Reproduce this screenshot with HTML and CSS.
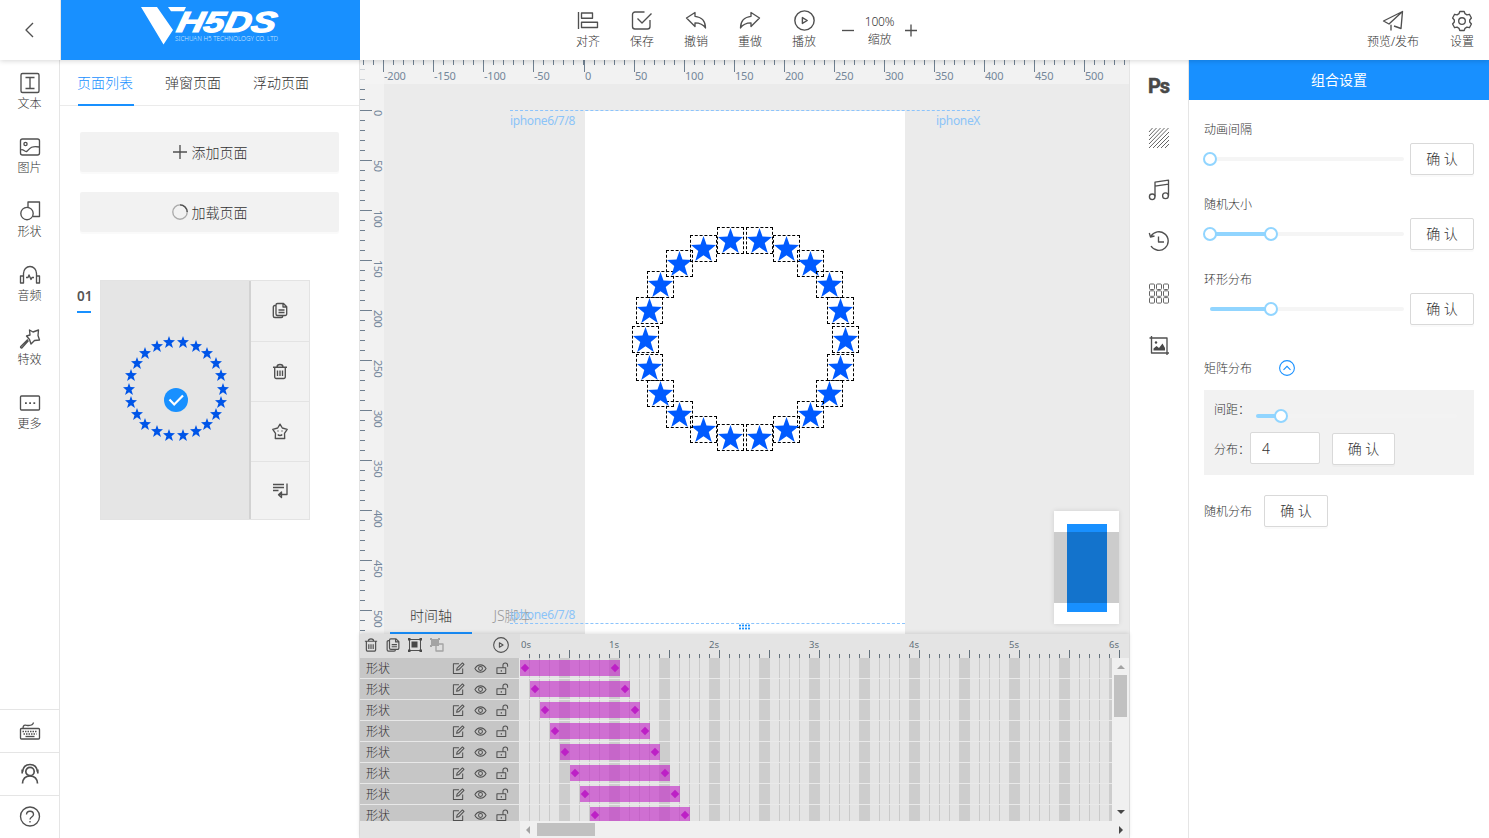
FILE: index.html
```html
<!DOCTYPE html>
<html lang="zh-CN">
<head>
<meta charset="utf-8">
<title>H5DS</title>
<link rel="stylesheet" href="styles.css">
</head>
<body>
<svg class="symbols" width="0" height="0">
  <symbol id="star" viewBox="0 0 100 100"><path d="M50 0 62 34 100 36 71 60 83 100 50 77 17 100 29 60 0 36 38 34Z"/></symbol>
  <symbol id="copy" viewBox="0 0 16 16"><path d="M5.500 1h6l3.200 3.200v7.300a1.500 1.500 0 0 1-1.500 1.500H5.500A1.500 1.500 0 0 1 4 11.500v-9A1.500 1.500 0 0 1 5.500 1zM11 1v3.500h3.500M6.500 7.500h6M6.500 10h6M4 3H2.800A1.500 1.500 0 0 0 1.300 4.500v9A1.500 1.500 0 0 0 2.800 15h6.500a1.500 1.500 0 0 0 1.500-1.500V13"/></symbol>
  <symbol id="trash" viewBox="0 0 16 16"><path d="M1 3.700h14M5 3.500C5 1.800 5.800 1 8 1s3 .8 3 2.500M2.700 4v9.500a1.500 1.500 0 0 0 1.500 1.500h7.600a1.500 1.500 0 0 0 1.500-1.500V4M5.500 7v5.500M8 7v5.500M10.500 7v5.500"/></symbol>
  <symbol id="edit" viewBox="0 0 14 14"><path d="M7.500 2H1.500v10.500h10V7M5 9l.5-2.300L11.300 1l1.600 1.600L7.200 8.400z"/></symbol>
  <symbol id="eye" viewBox="0 0 14 14"><path d="M1 7c3-5.200 9-5.200 12 0-3 5.200-9 5.200-12 0z"/><circle cx="7" cy="7" r="2.100"/></symbol>
  <symbol id="unlock" viewBox="0 0 14 14"><path d="M1 6.300h9.500v6.200H1zM7.500 6V3.500a2.500 2.500 0 0 1 5 0V5M5.700 8.500v2"/></symbol>
  <symbol id="play" viewBox="0 0 20 20"><circle cx="10" cy="10" r="9.200"/><path d="M8 7.200v5.600l4.600-2.800z"/></symbol>
</svg>

<header class="topbar">
  <div class="back"><svg class="ico" width="20" height="20" viewBox="0 0 20 20"><path d="M13 3 6 10l7 7"/></svg></div>
  <div class="brand">
    <svg width="142" height="40" viewBox="0 0 142 40">
      <path class="brand-fill" d="M0 0h16l16 23-9.500 14.500zM27 0h18l-2 4.200H30z"/>
      <text class="brand-name" transform="translate(0 25.300) skewX(-12)" x="34.500" y="0" textLength="99" lengthAdjust="spacingAndGlyphs">H5DS</text>
      <text class="brand-sub" x="34" y="34.300" textLength="103" lengthAdjust="spacingAndGlyphs">SICHUAN H5 TECHNOLOGY CO. LTD</text>
    </svg>
  </div>
  <div class="tools">
    <div class="tool"><svg class="ico" width="22" height="22" viewBox="0 0 22 22"><path d="M1.500 2v17M4.500 3h11v5.200h-11zM4.500 12.200h16v5.300h-16z"/></svg><span>对齐</span></div>
    <div class="tool"><svg class="ico" width="22" height="22" viewBox="0 0 22 22"><path d="M13.500 2H4a2.500 2.500 0 0 0-2.500 2.500v12A2.500 2.500 0 0 0 4 19h12.500a2.500 2.500 0 0 0 2.500-2.500V10M6.500 8.500l4.500 4.500 9.500-9.500"/></svg><span>保存</span></div>
    <div class="tool"><svg class="ico" width="22" height="22" viewBox="0 0 22 22"><path d="M1.500 8 10 2.500v3.800c6.500.5 10.500 5 10.500 11.700-2.500-4-5.500-5.200-10.500-5.200v3.700z"/></svg><span>撤销</span></div>
    <div class="tool"><svg class="ico" width="22" height="22" viewBox="0 0 22 22"><path d="M20.500 8 12 2.500v3.800C5.500 6.800 1.500 11.300 1.500 18c2.500-4 5.500-5.200 10.500-5.200v3.700z"/></svg><span>重做</span></div>
    <div class="tool"><svg class="ico" width="21" height="22"><use href="#play" width="21" height="21"/></svg><span>播放</span></div>
    <div class="zoom">
      <svg class="ico" width="14" height="14" viewBox="0 0 14 14"><path d="M1 7.500h12"/></svg>
      <div class="zoom-text"><span>100%</span><span>缩放</span></div>
      <svg class="ico" width="14" height="14" viewBox="0 0 14 14"><path d="M1 7.500h12M7 1.500v12"/></svg>
    </div>
  </div>
  <div class="actions">
    <div class="tool"><svg class="ico" width="22" height="22" viewBox="0 0 22 22"><path d="M20.500 1.500 1.500 11l5.500 3L20.500 1.500 19 18.500l-7-2.500M9 14.700V20.500"/></svg><span>预览/发布</span></div>
    <div class="tool"><svg class="ico" width="22" height="22" viewBox="0 0 22 22"><path d="M8.800 1.500h4.400l.8 2.200 1.900 1.100 2.500-.5 2 3.700-1.700 2v2l1.700 2-2 3.700-2.500-.5-1.900 1.100-.8 2.200H8.800L8 18.300l-1.900-1.100-2.500.5-2-3.700 1.700-2v-2l-1.700-2 2-3.700 2.500.5L8 3.700z"/><circle cx="11" cy="11" r="3.300"/></svg><span>设置</span></div>
  </div>
</header>

<main class="workspace">
  <nav class="side">
    <div class="side-list">
      <div class="side-item"><svg class="ico" width="22" height="22" viewBox="0 0 22 22"><rect x="2" y="1.500" width="18" height="19" rx="1.500"/><path d="M6.500 5.500h9M6.500 16.500h9M11 5.500v11"/></svg><span>文本</span></div>
      <div class="side-item"><svg class="ico" width="22" height="22" viewBox="0 0 22 22"><rect x="1.500" y="3" width="19" height="16" rx="2"/><circle cx="6.500" cy="8" r="1.600"/><path d="M2 14c2-1.500 3.500 2 5.500 1.500C10 14.500 10.500 9 20 11"/></svg><span>图片</span></div>
      <div class="side-item"><svg class="ico" width="22" height="22" viewBox="0 0 22 22"><circle cx="8" cy="13.500" r="6.200"/><path d="M9 7V2h11.500v14.500H14"/></svg><span>形状</span></div>
      <div class="side-item"><svg class="ico" width="22" height="22" viewBox="0 0 22 22"><path d="M4.500 12V9.500a6.500 7 0 0 1 13 0V12M1.500 12h3v7h-3zM17.500 12h3v7h-3zM7 13.500h2l1-2.500 2 4.500 1-2h2"/></svg><span>音频</span></div>
      <div class="side-item"><svg class="ico" width="22" height="22" viewBox="0 0 22 22"><path d="M10.500 2 14 4l5.500-2-.5 5.500 1.500 4.500-5 .5L12 16l-1.500-4.500L7.500 8l3.500-1zM9.500 12.500 3 19.800c-1 .5-2-.5-1.200-1.300l7-7"/></svg><span>特效</span></div>
      <div class="side-item"><svg class="ico" width="22" height="22" viewBox="0 0 22 22"><rect x="1.500" y="4" width="19" height="14" rx="1"/><path class="dots" d="M6 11.200h1.800M10.200 11.200H12M14.400 11.200h1.800"/></svg><span>更多</span></div>
    </div>
    <div class="side-foot">
      <div class="foot-item"><svg class="ico" width="22" height="22" viewBox="0 0 22 22"><rect x="1.500" y="8.500" width="19" height="10.500" rx="1"/><path d="M4 8.500c0-5 3-3 5.500-3S14 5.500 14.500 2.500"/><path class="keys" d="M3.500 11.500h15M4.500 14h13"/><path d="M6.500 16.500h9"/></svg></div>
      <div class="foot-item"><svg class="ico bold" width="22" height="22" viewBox="0 0 22 22"><circle cx="11" cy="8.500" r="4.200"/><path d="M3.500 20.500c.3-4.500 3-7.500 7.500-7.500s7.200 3 7.500 7.500M3.500 9C4 4 7 1.500 11 1.500S18 4 18.500 9M3.200 6.500v4M18.800 6.500v4"/></svg></div>
      <div class="foot-item"><svg class="ico" width="22" height="22" viewBox="0 0 22 22"><circle cx="11" cy="10.500" r="9.500"/><path d="M7.500 8.500c.2-4.500 7-4.200 7 0 0 2.500-3.500 2.500-3.500 5M11 15V16.500"/></svg></div>
    </div>
  </nav>

  <section class="pages">
    <div class="page-tabs"><span class="page-tab active">页面列表</span><span class="page-tab">弹窗页面</span><span class="page-tab">浮动页面</span></div>
    <div class="page-buttons">
      <button class="page-btn"><svg class="ico" width="16" height="16" viewBox="0 0 16 16"><path d="M1 8h14M8 1v14"/></svg><span>添加页面</span></button>
      <button class="page-btn"><svg class="ico" width="16" height="16" viewBox="0 0 16 16"><circle class="spin-track" cx="8" cy="8" r="7.200"/><path d="M8 .8A7.200 7.200 0 0 1 15.200 8"/></svg><span>加载页面</span></button>
    </div>
    <div class="page-row">
      <div class="page-no">01</div>
      <div class="page-card">
        <div class="thumb" id="thumb">
          <svg class="badge" width="24" height="24" viewBox="0 0 24 24"><circle cx="12" cy="12" r="12"/><path d="m5.500 11.500 4.700 5L19 7.500"/></svg>
        </div>
        <div class="card-tools">
          <div class="card-tool"><svg class="ico" width="16" height="17"><use href="#copy"/></svg></div>
          <div class="card-tool"><svg class="ico" width="16" height="17"><use href="#trash"/></svg></div>
          <div class="card-tool"><svg class="ico" width="16" height="17" viewBox="0 0 16 17"><path d="M8 1.200 10.300 5l4.900 1.300-2.700 4 .2 5.200H3.300l.2-5.200-2.700-4L5.700 5zM6 7.500v1M10 7.500v1M5.800 11.500c1 1.300 3.400 1.300 4.400 0"/></svg></div>
          <div class="card-tool"><svg class="ico" width="16" height="17" viewBox="0 0 16 17"><path d="M1 2.500h11M1 5.500h11M1 8.500h5.500M15 1.500v11H7M9.500 10 6.500 12.700l3 2.800z"/></svg></div>
        </div>
      </div>
    </div>
  </section>

  <section class="center">
    <div class="stage">
      <div class="phone"></div>
      <div class="guide guide-top"><span>iphone6/7/8</span><span>iphoneX</span></div>
      <div class="stars" id="stars"></div>
      <div class="ruler-y" id="rulerY"></div>
      <div class="ruler-x" id="rulerX"></div>
      <div class="bottom-tabs"><span class="bottom-tab active">时间轴</span><span class="bottom-tab">JS脚本</span></div>
      <div class="guide guide-bottom"><span>iphone6/7/8</span></div>
      <div class="grip"></div>
      <div class="minimap"><div class="mini-page"></div><div class="mini-view"></div></div>
    </div>
    <div class="timeline">
      <div class="tl-head">
        <div class="tl-tools">
          <svg class="ico" width="14" height="16"><use href="#trash"/></svg>
          <svg class="ico" width="14" height="16"><use href="#copy"/></svg>
          <svg class="ico frame" width="14" height="14" viewBox="0 0 14 14"><path d="M1.500 1.500h11v11h-11z"/><path class="solid" d="M0 0h2.500v2.500H0zM11.500 0H14v2.500h-2.500zM0 11.500h2.500V14H0zM11.500 11.500H14V14h-2.500zM3.500 3.500h6v6h-6z"/></svg>
          <svg class="ico dim" width="14" height="14" viewBox="0 0 14 14"><path d="M6 6h7v7H6z"/><path class="solid" d="M1 1h8v7H1zM0 0h2v2H0zM8 0h2v2H8zM0 7h2v2H0z"/></svg>
          <svg class="ico tl-play" width="16" height="16"><use href="#play"/></svg>
        </div>
        <div class="tl-ruler" id="tlRuler"></div>
      </div>
      <div class="tl-body">
        <div class="tl-names" id="tlNames"></div>
        <div class="tl-grid" id="tlGrid"></div>
        <div class="vscroll"><i class="arrow up"></i><i class="vthumb"></i><i class="arrow down"></i></div>
      </div>
      <div class="tl-foot"><div class="hscroll"><i class="arrow left"></i><i class="hthumb"></i><i class="arrow right"></i></div></div>
    </div>
  </section>

  <aside class="strip">
    <div class="strip-item ps">Ps</div>
    <div class="strip-item"><svg class="ico thin" width="22" height="22" viewBox="0 0 22 22"><path d="M1 5l3.500-4M1 9l7.500-8M1 13 12.500 1M1 17 16.500 1M1 21 20.500 1M5 21 21 5M9 21 21 9M13 21l8-8M17 21l4-4"/></svg></div>
    <div class="strip-item"><svg class="ico" width="22" height="22" viewBox="0 0 22 22"><path d="M7 17.500V3.200l13.500-2v15.500M7 7.200l13.500-2"/><circle cx="4.200" cy="17.800" r="2.800"/><circle cx="17.500" cy="16.700" r="2.900"/></svg></div>
    <div class="strip-item"><svg class="ico" width="22" height="22" viewBox="0 0 22 22"><path d="M2.800 5.500A9.300 9.300 0 1 1 3 15M1.300 2l1.200 4 4-1M10.500 5.500v5.500h5.500"/></svg></div>
    <div class="strip-item"><svg class="ico thin" width="22" height="22" viewBox="0 0 22 22"><g id="cells"><rect x="1.500" y="1" width="5" height="5.500" rx="1"/><rect x="8.500" y="1" width="5" height="5.500" rx="1"/><rect x="15.500" y="1" width="5" height="5.500" rx="1"/></g><use href="#cells" y="6.800"/><use href="#cells" y="13.600"/></svg></div>
    <div class="strip-item"><svg class="ico" width="22" height="22" viewBox="0 0 22 22"><path d="M3.500 1v17H21M1.500 3H19v17"/><path class="solid" d="M5.500 15.500v-2l3-2.500 2.500 2 3.500-4.500L17 13v2.500z"/><circle class="solid" cx="8" cy="7.500" r="1.200"/></svg></div>
  </aside>

  <aside class="panel">
    <h2 class="panel-title">组合设置</h2>
    <div class="panel-body">
      <div class="field"><label>动画间隔</label><div class="field-row"><div class="slider"><i class="knob at-0"></i></div><button class="ok">确 认</button></div></div>
      <div class="field"><label>随机大小</label><div class="field-row"><div class="slider"><i class="fill"></i><i class="knob at-0"></i><i class="knob at-1"></i></div><button class="ok">确 认</button></div></div>
      <div class="field"><label>环形分布</label><div class="field-row"><div class="slider"><i class="fill"></i><i class="knob at-1"></i></div><button class="ok">确 认</button></div></div>
      <div class="matrix-head"><label>矩阵分布</label><svg width="16" height="16" viewBox="0 0 16 16"><circle cx="8" cy="8" r="7.400"/><path d="m4.500 9.800 3.500-3.500 3.500 3.500"/></svg></div>
      <div class="matrix">
        <div class="matrix-gap"><label>间距：</label><div class="slider pale"><i class="fill short"></i><i class="knob at-2"></i></div></div>
        <div class="matrix-num"><label>分布：</label><div class="num">4</div><button class="ok">确 认</button></div>
      </div>
      <div class="random"><label>随机分布</label><button class="ok">确 认</button></div>
    </div>
  </aside>
</main>
<script src="app.js"></script>
</body>
</html>
```
FILE: styles.css
```css
* { box-sizing: border-box; }
body {
  margin: 0; width: 1489px; height: 838px; overflow: hidden; display: flex; flex-direction: column;
  background: #fff; color: #333; font: 300 12px/18px "Noto Sans", "Noto Sans CJK SC", sans-serif;
}
.symbols { position: absolute; }
svg { display: block; flex: none; }
button { font: inherit; color: inherit; }
i { display: block; }
.ico { fill: none; stroke: #505050; stroke-width: 1.350; stroke-linejoin: round; }
.ico.bold { stroke-width: 1.700; }
.ico.thin { stroke-width: 1; stroke: #666; }
.ico .solid { fill: #484848; stroke: none; }
.ico .dots { stroke-width: 1.800; }
.ico .keys { stroke-width: 1.400; stroke-dasharray: 1.500 1; }

.topbar { position: relative; z-index: 5; flex: none; height: 60px; display: flex; background: #fff; box-shadow: 0 1px 5px rgba(0,0,0,.16); }
.back { width: 61px; border-right: 1px solid #e8e8e8; display: flex; align-items: center; justify-content: center; }
.brand { width: 299px; background: #1890ff; padding: 7px 0 0 80px; }
.brand-fill { fill: #fff; }
.brand-name { fill: #fff; stroke: #fff; stroke-width: 1.200; font: italic 700 29px "Liberation Sans", sans-serif; }
.brand-sub { fill: #cfe7ff; font: 300 6.500px "Noto Sans", sans-serif; }
.tools { display: flex; padding-left: 201px; }
.tool { width: 54px; padding-top: 10px; display: flex; flex-direction: column; align-items: center; white-space: nowrap; }
.tool span { padding-top: 1px; }
.zoom { display: flex; align-items: center; padding-left: 10px; gap: 5px; }
.zoom-text { width: 39px; padding-top: 2px; display: flex; flex-direction: column; align-items: center; letter-spacing: -.2px; }
.actions { margin-left: auto; display: flex; gap: 15px; }

.workspace { flex: 1; display: flex; min-height: 0; }
.side { width: 60px; border-right: 1px solid #e5e5e5; display: flex; flex-direction: column; justify-content: space-between; }
.side-list { padding-top: 12px; }
.side-item { height: 64px; display: flex; flex-direction: column; align-items: center; }
.side-item span { padding-top: 1px; }
.foot-item { height: 43px; border-top: 1px solid #e5e5e5; display: flex; align-items: center; justify-content: center; }

.pages { width: 300px; border-right: 1px solid #e5e5e5; }
.page-tabs { height: 46px; border-bottom: 1px solid #ebebeb; padding-left: 18px; display: flex; gap: 32px; font-size: 14px; line-height: 45px; }
.page-tab { width: 56px; height: 46px; text-indent: -1px; white-space: nowrap; }
.page-tab.active { color: #1890ff; border-bottom: 2px solid #1890ff; }
.page-buttons { padding: 26px 20px 0; display: grid; gap: 20px; }
.page-btn { height: 40px; border: 0; border-radius: 2px; background: #f2f2f2; box-shadow: 0 2px 0 rgba(0,0,0,.02); display: flex; align-items: center; justify-content: center; gap: 4px; font-size: 14px; padding: 0; }
.page-btn span { padding-top: 2px; }
.spin-track { stroke: #aaa; }
.page-row { display: flex; padding: 48px 0 0 17px; }
.page-no { width: 23px; padding-top: 7px; font-size: 13.500px; font-weight: 600; color: #555; }
.page-no::after { content: ""; display: block; width: 14px; height: 2px; margin-top: 6px; background: #1890ff; }
.page-card { width: 210px; height: 240px; border: 1px solid #e3e3e3; display: flex; }
.thumb { position: relative; width: 150px; background: #e5e5e5; border-right: 2px solid #d2d2d2; }
.thumb .mini-star { position: absolute; width: 12px; height: 12px; fill: #0055e8; }
.badge { position: absolute; left: 63px; top: 107px; z-index: 1; }
.badge circle { fill: #1890ff; }
.badge path { fill: none; stroke: #fff; stroke-width: 2.200; }
.card-tools { flex: 1; background: #f2f2f2; }
.card-tool { height: 60px; border-bottom: 1px solid #e3e3e3; display: flex; align-items: center; justify-content: center; padding-right: 1px; }
.card-tool:first-child { height: 61px; padding-bottom: 2px; }
.card-tool:last-child { height: 57px; border: 0; }

.center { width: 770px; border-right: 1px solid #e5e5e5; display: flex; flex-direction: column; }
.stage { position: relative; height: 574px; overflow: hidden; background: #ebebeb; }
.phone { position: absolute; left: 225px; top: 51px; width: 320px; bottom: 0; background: #fff; }
.guide { position: absolute; left: 150px; color: #8cc4f8; line-height: 20px; display: flex; justify-content: space-between; font-weight: 400; letter-spacing: -.35px; }
.guide-top { top: 50px; width: 470px; border-top: 1px dashed #8cc4fc; }
.guide-bottom { top: 545px; width: 395px; height: 19px; border-bottom: 1px dashed #8cc4fc; }
.select { position: absolute; width: 27px; height: 27px; border: 1px dashed #000; }
.select svg { width: 25px; height: 25px; fill: #005aff; }
.ruler-x { position: absolute; left: 0; top: 0; width: 770px; height: 24px; display: flex; font-size: 11px; font-weight: 400; color: #74879a; line-height: 14px; letter-spacing: -.200px; background: rgba(245,245,245,.7); }
.rx { flex: none; width: 50px; padding: 9px 0 0 1px; background: linear-gradient(#708090,#708090) 0 0/1px 12px no-repeat, repeating-linear-gradient(90deg, #708090 0 1px, transparent 1px 10px) 0 0/100% 5px no-repeat; }
.rx.lead { width: 23px; background: repeating-linear-gradient(90deg, #708090 0 1px, transparent 1px 10px) 3px 0/100% 5px no-repeat; }
.rx.wide { width: 51px; }
.ruler-y { position: absolute; left: 0; top: 0; width: 24px; height: 574px; background: #f2f2f2; font-size: 11px; font-weight: 400; color: #74879a; line-height: 14px; letter-spacing: -.6px; }
.ry { height: 50px; padding: 0 0 0 11px; background: linear-gradient(#708090,#708090) 0 0/12px 1px no-repeat, repeating-linear-gradient(#708090 0 1px, transparent 1px 10px) 0 0/5px 100% no-repeat; }
.ry span { writing-mode: vertical-rl; display: block; width: 14px; }
.ry.lead { background: repeating-linear-gradient(#708090 0 1px, transparent 1px 10px) 0 9px/5px 36px no-repeat; }
.bottom-tabs { position: absolute; left: 30px; bottom: 0; display: flex; font-size: 14px; line-height: 36px; }
.bottom-tab { width: 82px; height: 36px; text-align: center; color: #999; }
.bottom-tab.active { color: #333; border-bottom: 2px solid #1890ff; }
.grip { position: absolute; left: 379px; top: 564px; width: 11px; height: 6px; background: repeating-linear-gradient(90deg, #1890ff 0 2px, transparent 2px 3px) 0 1px/11px 1px no-repeat, repeating-linear-gradient(90deg, #1890ff 0 2px, transparent 2px 3px) 0 4px/11px 1px no-repeat, repeating-linear-gradient(90deg, #a8d4fb 0 2px, transparent 2px 3px); }
.minimap { position: absolute; left: 694px; top: 451px; width: 65px; height: 113px; background: #fff; box-shadow: 0 0 5px rgba(0,0,0,.12); }
.mini-page { position: absolute; left: 13px; top: 13px; width: 40px; height: 88px; background: #1890ff; }
.mini-view { position: absolute; left: 0; top: 21px; width: 65px; height: 71px; background: rgba(0,0,0,.2); }

.timeline { position: relative; height: 204px; background: #e4e4e4; display: flex; flex-direction: column; box-shadow: 0 -1px 4px rgba(0,0,0,.12); }
.tl-head { height: 24px; display: flex; }
.tl-tools { width: 160px; background: #dedede; padding: 0 11px 2px 4px; display: flex; align-items: center; gap: 8px; }
.tl-play { margin-left: auto; }
.ico.frame { stroke-width: 1; }
.dim { stroke: #a3a3a3; }
.ico.dim .solid { fill: #a3a3a3; }
.tl-ruler { flex: 1; overflow: hidden; display: flex; padding-left: 1px; font-size: 9.500px; font-weight: 400; line-height: 22px; color: #62707a;
  background: repeating-linear-gradient(90deg, transparent 0 49px, #62707a 49px 50px) 0 16px/600px 8px no-repeat, repeating-linear-gradient(90deg, transparent 0 9px, #62707a 9px 10px) 0 20px/600px 4px no-repeat; }
.tl-ruler span { flex: none; width: 100px; text-align: right; padding-right: 2px; }
.tl-ruler span:first-child { width: 10px; padding: 0; text-align: left; margin-right: -10px; }
.tl-body { height: 163px; display: flex; overflow: hidden; }
.tl-names { width: 160px; border-right: 1px solid #e8e8e8; }
.tl-name { height: 21px; border-bottom: 1px solid #e8e8e8; background: #c6c6c6; padding: 1px 10px 0 6px; display: flex; align-items: center; gap: 9px; line-height: 20px; }
.tl-name span { flex: 1; }
.tl-name .ico { stroke-width: 1.100; width: 13px; height: 13px; }
.tl-grid { width: 592px; overflow: hidden; background:
  repeating-linear-gradient(90deg, transparent 0 39px, #cdcdcd 39px 50px),
  repeating-linear-gradient(90deg, transparent 0 9px, #cacaca 9px 10px), #e4e4e4; }
.tl-track { height: 21px; padding-top: 2px; border-bottom: 1px solid #e9e9e9; }
.clip { width: 100px; height: 16px; padding: 0 2px; background: rgba(193,33,199,.6); display: flex; justify-content: space-between; align-items: center; }
.clip i { width: 6px; height: 6px; background: #bd20c6; transform: rotate(45deg); }
.vscroll { flex: 1; background: #f0f0f0; padding: 7px 0 7px; display: flex; flex-direction: column; align-items: center; }
.vthumb { width: 13px; height: 42px; margin-top: 6px; margin-bottom: auto; background: #c1c1c1; }
.arrow { border: 4px solid transparent; }
.arrow.up { border-top: 0; border-bottom-color: #a3a3a3; }
.arrow.down { border-bottom: 0; border-top-color: #484848; }
.tl-foot { flex: 1; display: flex; justify-content: flex-end; }
.hscroll { width: 609px; background: #f0f0f0; display: flex; align-items: center; padding: 0 6px; }
.hthumb { width: 58px; height: 13px; margin-left: 7px; margin-right: auto; background: #c1c1c1; }
.arrow.left { border-left: 0; border-right-color: #a3a3a3; }
.arrow.right { border-right: 0; border-left-color: #484848; }

.strip { width: 59px; border-right: 1px solid #e5e5e5; }
.strip-item { height: 52px; display: flex; align-items: center; justify-content: center; }
.ps { padding-right: 1px; font: 700 20px "Roboto", sans-serif; letter-spacing: -1px; color: #484848; -webkit-text-stroke: .5px #484848; }

.panel { width: 300px; }
.panel-title { margin: 0; height: 40px; background: #1890ff; color: #fff; text-align: center; font-size: 14px; line-height: 40px; font-weight: 400; }
.panel-body { padding: 21px 15px 0; }
.field { height: 75px; }
.field:nth-child(3) { height: 80px; }
.field-row { display: flex; align-items: center; margin-top: 4px; }
.slider { position: relative; width: 194px; height: 4px; margin: 0 6px; border-radius: 2px; background: #f5f5f5; }
.slider.pale { width: 202px; background: #f3f3f3; margin: 14px 0 0 6px; }
.fill { width: 61px; height: 4px; border-radius: 2px; background: #91d5ff; }
.fill.short { width: 25px; }
.knob { position: absolute; top: -5px; width: 14px; height: 14px; border: 2px solid #91d5ff; border-radius: 50%; background: #fff; }
.knob.at-0 { left: -7px; }
.knob.at-1 { left: 54px; }
.knob.at-2 { left: 18px; }
.ok { flex: none; width: 64px; height: 32px; border: 1px solid #d9d9d9; border-radius: 2px; background: #fff; box-shadow: 0 2px 0 rgba(0,0,0,.02); padding: 0; font-size: 14px; }
.matrix-head { display: flex; align-items: center; gap: 27px; height: 24px; margin-top: 6px; }
.matrix-head svg { fill: none; stroke: #1890ff; stroke-width: 1.100; margin-top: -2px; }
.matrix { height: 85px; margin-top: 9px; padding: 10px; background: #f2f2f2; }
.matrix-gap { display: flex; height: 32px; }
.matrix-gap label, .matrix-num label { width: 36px; padding-top: 1px; white-space: nowrap; }
.matrix-num { display: flex; align-items: center; }
.matrix-num label { padding-top: 3px; }
.num { width: 70px; height: 32px; border: 1px solid #d9d9d9; border-radius: 2px; background: #fff; padding: 0 11px; font-size: 14px; line-height: 32px; }
.matrix-num .ok { margin: 1px 0 -1px 12px; width: 63px; }
.random { display: flex; align-items: center; gap: 12px; margin-top: 20px; }
.random label { padding-top: 2px; }
```
FILE: app.js
```js
const $ = id => document.getElementById(id);
const use = name => `<svg class="ico"><use href="#${name}"/></svg>`;
const COUNT = 22;

// Stars evenly spaced on a ring
function ring(el, cx, cy, r, make) {
  let html = '';
  for (let k = 0; k < COUNT; k++) {
    const a = k * 2 * Math.PI / COUNT;
    html += make(cx + r * Math.cos(a), cy + r * Math.sin(a));
  }
  el.insertAdjacentHTML('beforeend', html);
}
ring($('stars'), 372, 266, 100, (x, y) =>
  `<div class="select" style="left:${Math.floor(x + 1e-6)}px;top:${Math.floor(y + 1e-6)}px"><svg><use href="#star"/></svg></div>`);
ring($('thumb'), 69, 101.5, 47, (x, y) =>
  `<svg class="mini-star" style="left:${x.toFixed(1)}px;top:${y.toFixed(1)}px"><use href="#star"/></svg>`);

// Canvas rulers
let rx = '<div class="rx lead"></div>';
for (let v = -200; v <= 500; v += 50) rx += `<div class="rx${v === -50 ? ' wide' : ''}"><span>${v}</span></div>`;
$('rulerX').innerHTML = rx;
let ry = '<div class="ry lead"></div>';
for (let v = 0; v <= 500; v += 50) ry += `<div class="ry"><span>${v}</span></div>`;
$('rulerY').innerHTML = ry;

// Timeline
for (let s = 0; s <= 6; s++) $('tlRuler').insertAdjacentHTML('beforeend', `<span>${s}s</span>`);
for (let n = 0; n < 8; n++) {
  $('tlNames').insertAdjacentHTML('beforeend', `<div class="tl-name"><span>形状</span>${use('edit')}${use('eye')}${use('unlock')}</div>`);
  $('tlGrid').insertAdjacentHTML('beforeend', `<div class="tl-track"><div class="clip" style="margin-left:${n * 10}px"><i></i><i></i></div></div>`);
}
```
